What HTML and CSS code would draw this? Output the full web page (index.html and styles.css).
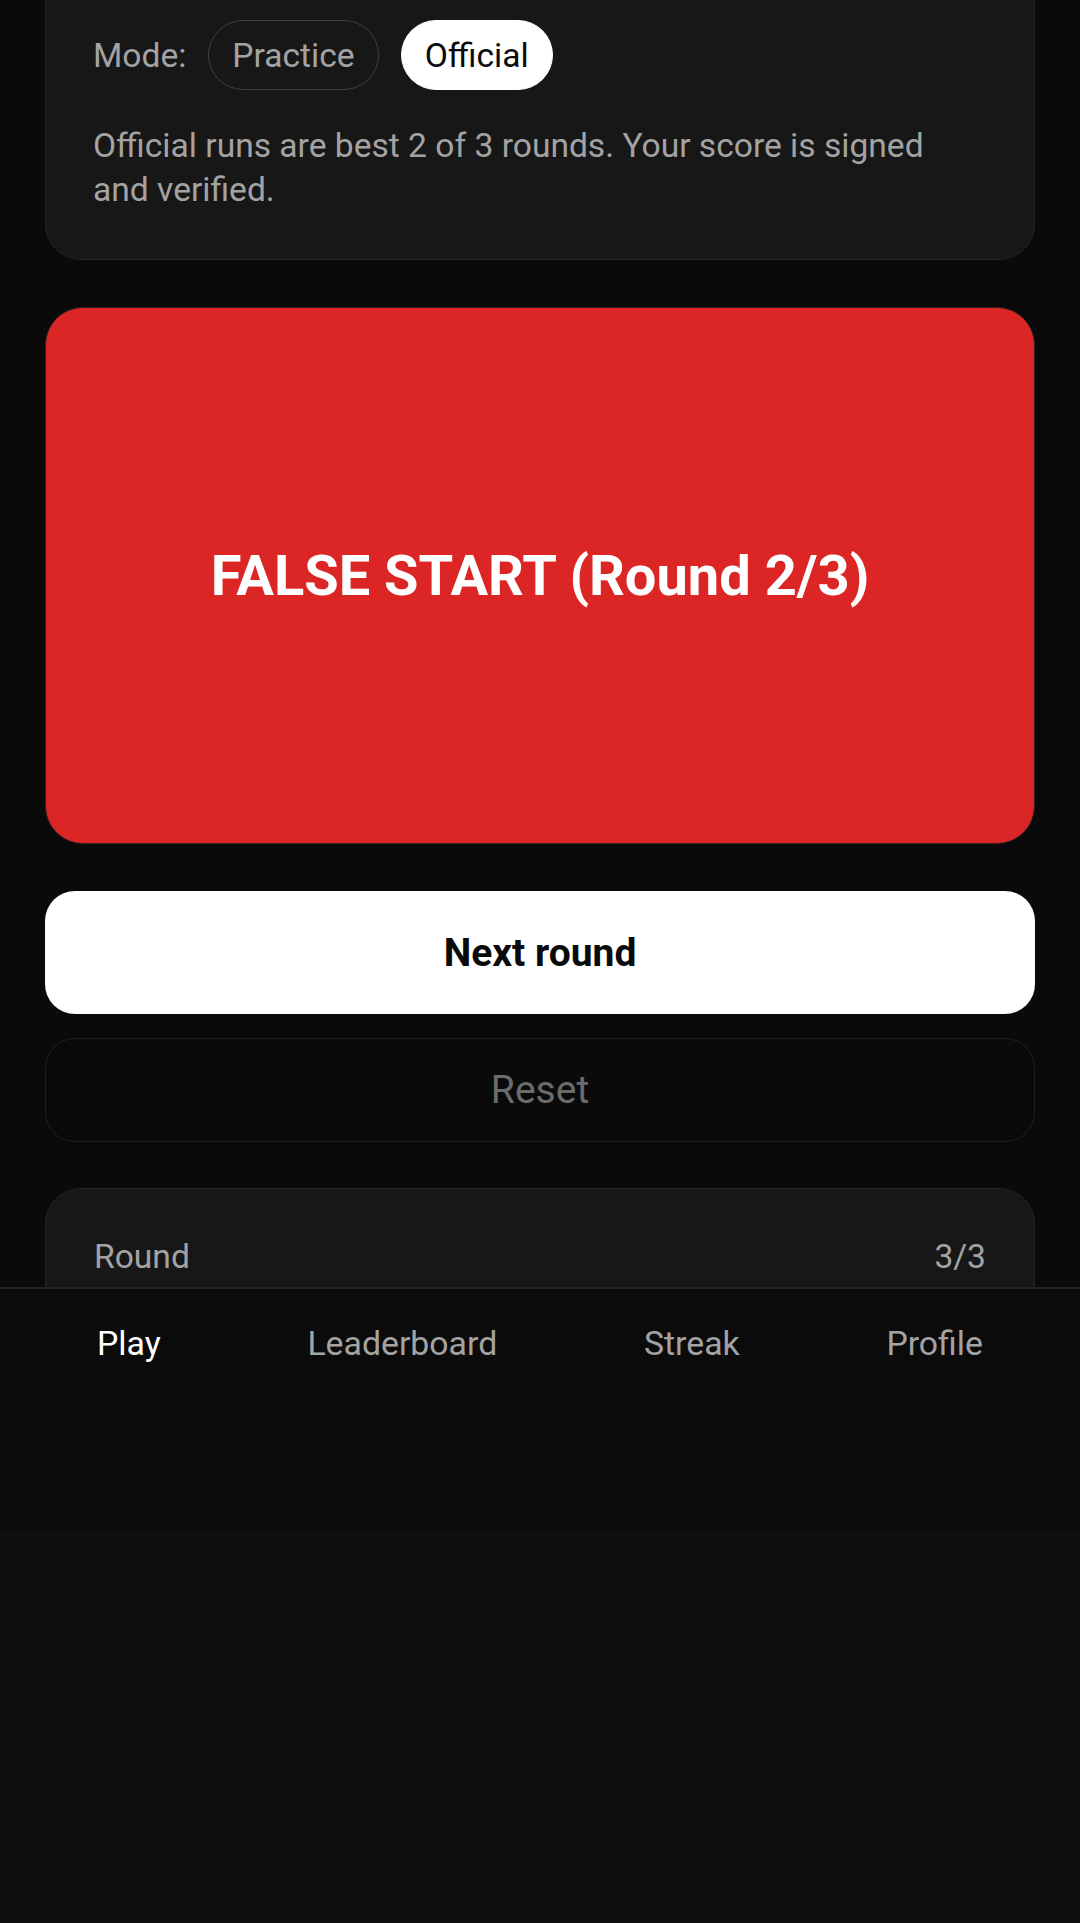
FILE: index.html
```html
<!DOCTYPE html>
<html lang="en">
<head>
<meta charset="utf-8">
<title>Reaction Test</title>
<link rel="stylesheet" href="styles.css">
</head>
<body>
<div class="screen">
  <main class="content">
    <section class="card mode-card">
      <div class="mode-row">
        <span class="mode-label">Mode:</span>
        <button class="pill">Practice</button>
        <button class="pill pill-active">Official</button>
      </div>
      <p class="mode-desc">Official runs are best 2 of 3 rounds. Your score is signed and verified.</p>
    </section>

    <section class="stage">
      <span class="stage-text">FALSE START (Round 2/3)</span>
    </section>

    <div class="actions">
      <button class="btn btn-primary">Next round</button>
      <button class="btn btn-ghost">Reset</button>
    </div>

    <section class="card stats-card">
      <div class="stat-row">
        <span>Round</span>
        <span>3/3</span>
      </div>
    </section>
  </main>

  <nav class="tabbar">
    <a class="tab tab-active">Play</a>
    <a class="tab">Leaderboard</a>
    <a class="tab">Streak</a>
    <a class="tab">Profile</a>
  </nav>
</div>
</body>
</html>
```

FILE: styles.css
```css
* { box-sizing: border-box; }

html, body {
  margin: 0;
  padding: 0;
}

body {
  background: #0f0f0f;
  font-family: Roboto, "Noto Sans", "Liberation Sans", sans-serif;
  color: #fafafa;
}

.screen {
  height: 1531px;
  display: flex;
  flex-direction: column;
  background: #0a0a0a;
  overflow: hidden;
}

.content {
  flex: 1;
  min-height: 0;
  overflow: hidden;
  padding: 0 45px;
  display: flex;
  flex-direction: column;
}

.card {
  background: #171717;
  border: 1px solid #27231f;
  border-radius: 36px;
  padding: 0 48px 47px;
}

.mode-card {
  margin-top: -29px;
  padding-top: 48px;
  padding-left: 47px;
}

.mode-row {
  display: flex;
  align-items: center;
  gap: 22px;
}

.mode-label {
  font-size: 33.6px;
  color: #a3a3a3;
}

.pill {
  font-family: inherit;
  font-size: 33.6px;
  height: 70px;
  padding: 0 23px;
  border-radius: 35px;
  border: 1.5px solid #404040;
  background: transparent;
  color: #a3a3a3;
}

.pill-active {
  background: #ffffff;
  border-color: #ffffff;
  color: #0a0a0a;
}

.mode-desc {
  margin: 34px 0 0;
  padding-right: 8px;
  font-size: 33.6px;
  line-height: 44px;
  color: #a3a3a3;
}

.stage {
  margin-top: 47px;
  height: 537px;
  flex-shrink: 0;
  background: #dc2626;
  border: 1.5px solid #3a2020;
  border-radius: 38px;
  display: flex;
  align-items: center;
  justify-content: center;
}

.stage-text {
  font-size: 56px;
  font-weight: 700;
  color: #ffffff;
}

.actions {
  margin-top: 47px;
  display: flex;
  flex-direction: column;
  gap: 24px;
}

.btn {
  font-family: inherit;
  font-size: 39px;
  border-radius: 30px;
  width: 100%;
}

.btn-primary {
  height: 123px;
  background: #ffffff;
  border: none;
  color: #0a0a0a;
  font-weight: 700;
}

.btn-ghost {
  height: 104px;
  background: transparent;
  border: 1.5px solid #1f1f1f;
  color: #6b6b6b;
}

.stats-card {
  margin-top: 46px;
  padding-top: 48px;
  flex-shrink: 0;
}

.stat-row {
  display: flex;
  justify-content: space-between;
  font-size: 33.6px;
  line-height: 40px;
  color: #a3a3a3;
}

.tabbar {
  height: 244px;
  flex-shrink: 0;
  border-top: 2px solid #232323;
  background: #0b0b0b;
  display: flex;
  justify-content: space-between;
  align-items: flex-start;
  padding: 30px 97px 0;
}

.tab {
  font-size: 33.8px;
  line-height: 50px;
  color: #a3a3a3;
}

.tab-active {
  color: #ffffff;
}
```
